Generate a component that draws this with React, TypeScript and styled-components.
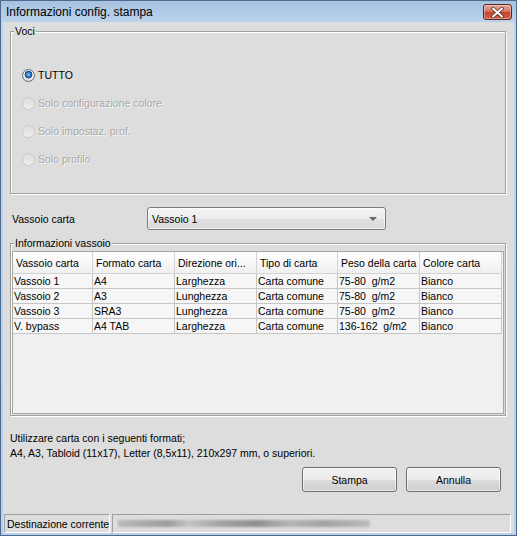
import React from "react";
import styled, { createGlobalStyle } from "styled-components";

const GlobalStyle = createGlobalStyle`
  html, body {
    margin: 0;
    padding: 0;
    background: #ffffff;
  }
  body {
    font-family: "Liberation Sans", Arial, sans-serif;
    font-size: 10.5px;
    color: #000000;
  }
  * {
    box-sizing: border-box;
  }
`;

const StyledWindow = styled.div`
  width: 517px;
  height: 536px;
  display: flex;
  flex-direction: column;
  border: 1px solid #4f6a8c;
  background: linear-gradient(to bottom, #a6c1e0 0, #bcd3ec 22px, #b7cfe9 100%);
`;

const StyledTitleBar = styled.div`
  height: 21px;
  display: flex;
  align-items: flex-start;
  padding: 0 4px 0 5px;
`;

const StyledTitle = styled.div`
  font-size: 12px;
  line-height: 22px;
  color: #000000;
`;

const StyledCloseBtn = styled.button`
  margin-left: auto;
  margin-top: 3px;
  width: 29px;
  height: 16px;
  padding: 0;
  display: flex;
  align-items: center;
  justify-content: center;
  border: 1px solid #5e2823;
  border-radius: 3px;
  background: linear-gradient(to bottom, #e8a797 0, #d77a66 45%, #c4432e 52%, #cf6246 100%);
  box-shadow: inset 0 0 0 1px rgba(255, 255, 255, 0.35);
`;

const StyledBody = styled.div`
  flex: 1;
  margin: 0 2px 2px;
  display: flex;
  flex-direction: column;
  background: #dddddd;
`;

const StyledContent = styled.div`
  display: flex;
  flex-direction: column;
  padding: 3px 8px 0 7px;
`;

const StyledGroup = styled.fieldset<{ $gap?: number }>`
  margin: ${(p) => p.$gap ?? 0}px 0 0;
  padding: 0 1px 1px;
  min-width: 0;
  border: 1px solid #a0a0a0;
  box-shadow: inset 1px 1px 0 #ffffff, 1px 1px 0 #ffffff;
`;

const StyledLegend = styled.legend`
  margin-left: 2px;
  padding: 0 1px;
  line-height: 12px;
  background: #dddddd;
`;

const StyledRadioList = styled.div`
  display: flex;
  flex-direction: column;
  padding: 24px 0 19px 10px;
`;

const StyledRadioRow = styled.label<{ $disabled?: boolean }>`
  height: 28px;
  display: flex;
  align-items: center;
  gap: 3px;
  color: ${(p) => (p.$disabled ? "#a9a9a9" : "#000000")};
  text-shadow: ${(p) => (p.$disabled ? "1px 1px 0 #f6f6f6" : "none")};
`;

const StyledRadioDot = styled.span<{ $checked?: boolean }>`
  width: 13px;
  height: 13px;
  border-radius: 50%;
  border: 1px solid ${(p) => (p.$checked ? "#6e6e6e" : "#c9c9c9")};
  background: ${(p) =>
    p.$checked
      ? "radial-gradient(circle at 50% 42%, #9fd9fb 0, #3b8ad6 1.6px, #1d5596 3.2px, #234f80 3.6px, #f4f4f4 4.2px, #d9d9d9 6px)"
      : "linear-gradient(to bottom, #dcdcdc, #efefef)"};
`;

const StyledComboRow = styled.div`
  margin-top: 13px;
  display: flex;
  align-items: center;
  height: 23px;
`;

const StyledComboLabel = styled.span`
  width: 137px;
  padding-left: 2px;
`;

const StyledCombo = styled.div`
  width: 239px;
  height: 23px;
  display: flex;
  align-items: center;
  padding-left: 4px;
  border: 1px solid #7b7b7b;
  border-radius: 3px;
  background: linear-gradient(to bottom, #f4f4f4 0, #ececec 50%, #e1e1e1 51%, #dadada 100%);
  box-shadow: inset 0 0 0 1px rgba(255, 255, 255, 0.6);
`;

const StyledComboArrow = styled.span`
  margin-left: auto;
  margin-right: 8px;
  width: 0;
  height: 0;
  border-left: 4px solid transparent;
  border-right: 4px solid transparent;
  border-top: 4px solid #676767;
`;

const StyledTable = styled.div`
  margin-top: 2px;
  height: 163px;
  border: 1px solid #a6a6a6;
  background: #f0f0f0;
`;

const StyledTableRow = styled.div`
  display: grid;
  grid-template-columns: 80px 82px 82px 81px 82px 82px;
`;

const StyledHeadCell = styled.div`
  height: 22px;
  line-height: 22px;
  padding-left: 3px;
  white-space: nowrap;
  overflow: hidden;
  background: linear-gradient(to bottom, #ffffff 0, #f7f7f7 50%, #f0f0f0 100%);
  border-right: 1px solid #d3d3d3;
  border-bottom: 1px solid #d3d3d3;
`;

const StyledCell = styled.div`
  height: 15px;
  line-height: 14px;
  padding-left: 1px;
  white-space: pre;
  overflow: hidden;
  background: #f6f6f6;
  border-right: 1px solid #c6c6c6;
  border-bottom: 1px solid #c6c6c6;
`;

const StyledNotes = styled.div`
  margin-top: 15px;
  line-height: 15px;
`;

const StyledButtonRow = styled.div`
  margin-top: 6px;
  display: flex;
  justify-content: flex-end;
  gap: 9px;
  padding-right: 5px;
`;

const StyledButton = styled.button`
  width: 95px;
  height: 25px;
  padding: 0;
  font: inherit;
  color: #000000;
  border: 1px solid #707070;
  border-radius: 3px;
  background: linear-gradient(to bottom, #f2f2f2 0, #ebebeb 50%, #dddddd 51%, #cfcfcf 100%);
  box-shadow: inset 0 0 0 1px rgba(255, 255, 255, 0.55);
`;

const StyledStatusBar = styled.div`
  margin-top: auto;
  height: 19px;
  display: flex;
  gap: 2px;
  padding: 0 3px 0 1px;
`;

const StyledStatusCell = styled.div<{ $width?: number }>`
  ${(p) => (p.$width ? `width: ${p.$width}px;` : "flex: 1;")}
  display: flex;
  align-items: center;
  padding-left: 2px;
  white-space: nowrap;
  overflow: hidden;
  border: 1px solid;
  border-color: #a0a0a0 #ffffff #ffffff #a0a0a0;
`;

const StyledBlurred = styled.span`
  width: 252px;
  height: 7px;
  margin-left: 3px;
  background: linear-gradient(
    to right,
    #b9b9b9 0,
    #9c9c9c 20%,
    #c4c4c4 28%,
    #a4a4a4 40%,
    #8f8f8f 55%,
    #b5b5b5 68%,
    #a2a2a2 82%,
    #bdbdbd 100%
  );
  filter: blur(1.3px);
`;

const COLUMNS = [
  "Vassoio carta",
  "Formato carta",
  "Direzione ori...",
  "Tipo di carta",
  "Peso della carta",
  "Colore carta",
];

const TRAYS = [
  ["Vassoio 1", "A4", "Larghezza", "Carta comune", "75-80  g/m2", "Bianco"],
  ["Vassoio 2", "A3", "Lunghezza", "Carta comune", "75-80  g/m2", "Bianco"],
  ["Vassoio 3", "SRA3", "Lunghezza", "Carta comune", "75-80  g/m2", "Bianco"],
  ["V. bypass", "A4 TAB", "Larghezza", "Carta comune", "136-162  g/m2", "Bianco"],
];

const ITEMS = [
  { label: "TUTTO", checked: true, disabled: false },
  { label: "Solo configurazione colore", checked: false, disabled: true },
  { label: "Solo impostaz. prof.", checked: false, disabled: true },
  { label: "Solo profilo", checked: false, disabled: true },
];

const CloseIcon = () => (
  <svg width="13" height="11" viewBox="0 0 13 11">
    <path
      d="M2 1.5 L11 9.5 M11 1.5 L2 9.5"
      stroke="#5a2a24"
      strokeWidth="3.6"
      strokeLinecap="round"
    />
    <path
      d="M2 1.5 L11 9.5 M11 1.5 L2 9.5"
      stroke="#ffffff"
      strokeWidth="2"
      strokeLinecap="round"
    />
  </svg>
);

export default function App() {
  return (
    <>
      <GlobalStyle />
      <StyledWindow>
        <StyledTitleBar>
          <StyledTitle>Informazioni config. stampa</StyledTitle>
          <StyledCloseBtn aria-label="Chiudi">
            <CloseIcon />
          </StyledCloseBtn>
        </StyledTitleBar>
        <StyledBody>
          <StyledContent>
            <StyledGroup>
              <StyledLegend>Voci</StyledLegend>
              <StyledRadioList>
                {ITEMS.map((item) => (
                  <StyledRadioRow key={item.label} $disabled={item.disabled}>
                    <StyledRadioDot $checked={item.checked} />
                    {item.label}
                  </StyledRadioRow>
                ))}
              </StyledRadioList>
            </StyledGroup>

            <StyledComboRow>
              <StyledComboLabel>Vassoio carta</StyledComboLabel>
              <StyledCombo>
                Vassoio 1
                <StyledComboArrow />
              </StyledCombo>
            </StyledComboRow>

            <StyledGroup $gap={7}>
              <StyledLegend>Informazioni vassoio</StyledLegend>
              <StyledTable>
                <StyledTableRow>
                  {COLUMNS.map((c) => (
                    <StyledHeadCell key={c}>{c}</StyledHeadCell>
                  ))}
                </StyledTableRow>
                {TRAYS.map((row) => (
                  <StyledTableRow key={row[0]}>
                    {row.map((v, i) => (
                      <StyledCell key={i}>{v}</StyledCell>
                    ))}
                  </StyledTableRow>
                ))}
              </StyledTable>
            </StyledGroup>

            <StyledNotes>
              Utilizzare carta con i seguenti formati;
              <br />
              A4, A3, Tabloid (11x17), Letter (8,5x11), 210x297 mm, o superiori.
            </StyledNotes>

            <StyledButtonRow>
              <StyledButton>Stampa</StyledButton>
              <StyledButton>Annulla</StyledButton>
            </StyledButtonRow>
          </StyledContent>

          <StyledStatusBar>
            <StyledStatusCell $width={106}>Destinazione corrente</StyledStatusCell>
            <StyledStatusCell>
              <StyledBlurred />
            </StyledStatusCell>
          </StyledStatusBar>
        </StyledBody>
      </StyledWindow>
    </>
  );
}
